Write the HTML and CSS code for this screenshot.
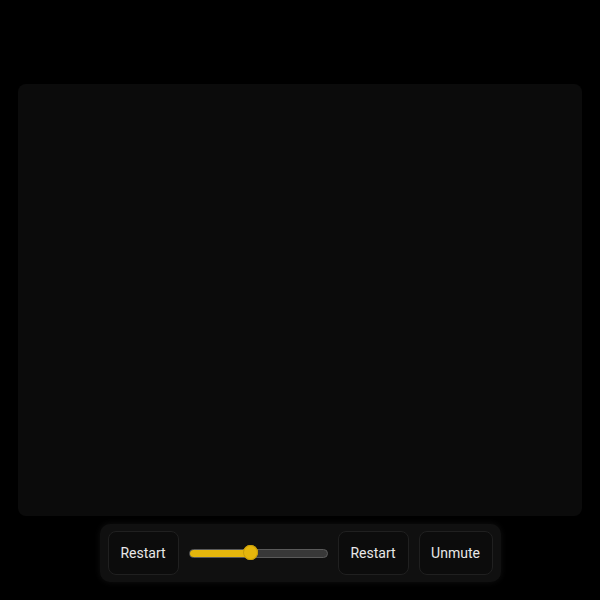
FILE: index.html
```html
<!DOCTYPE html>
<html>
<head>
<meta charset="utf-8">
<link rel="stylesheet" href="styles.css">
</head>
<body>
<div class="player">
  <div class="video"></div>
  <div class="controls">
    <button class="btn">Restart</button>
    <div class="slider">
      <div class="track">
        <div class="fill" style="width: 44%"></div>
      </div>
      <div class="thumb" style="left: 44%"></div>
    </div>
    <button class="btn">Restart</button>
    <button class="btn btn-wide">Unmute</button>
  </div>
</div>
</body>
</html>
```
FILE: styles.css
```css
html, body {
  margin: 0;
  padding: 0;
  background: #000;
  width: 600px;
  height: 600px;
  overflow: hidden;
}
body {
  font-family: Roboto, "Liberation Sans", sans-serif;
}
.player {
  padding: 84px 18px 0 18px;
  display: flex;
  flex-direction: column;
  align-items: center;
  gap: 8px;
}
.video {
  width: 564px;
  height: 432px;
  background: #0b0b0b;
  border-radius: 8px;
}
.controls {
  display: flex;
  align-items: center;
  gap: 10px;
  padding: 7px 8px;
  background: #101010;
  border-radius: 10px;
  box-shadow: 0 0 6px rgba(20, 20, 20, 0.8);
}
.btn {
  width: 71px;
  height: 44px;
  background: #0c0c0c;
  border: 1px solid #202020;
  border-radius: 8px;
  color: #e8e8e8;
  font-family: Roboto, "Liberation Sans", sans-serif;
  font-size: 14px;
  padding: 0;
}
.btn-wide {
  width: 74px;
}
.slider {
  position: relative;
  width: 139px;
  height: 16px;
  display: flex;
  align-items: center;
}
.track {
  width: 100%;
  height: 9px;
  box-sizing: border-box;
  border: 1px solid #5a5a5a;
  background: #383838;
  border-radius: 5px;
  overflow: hidden;
}
.fill {
  height: 100%;
  background: #e5b60c;
}
.thumb {
  position: absolute;
  top: 0;
  width: 15px;
  height: 15px;
  margin-left: -7px;
  border-radius: 50%;
  background: #e5b60c;
  box-shadow: inset 0 0 0 1px #c99e08;
}
```
